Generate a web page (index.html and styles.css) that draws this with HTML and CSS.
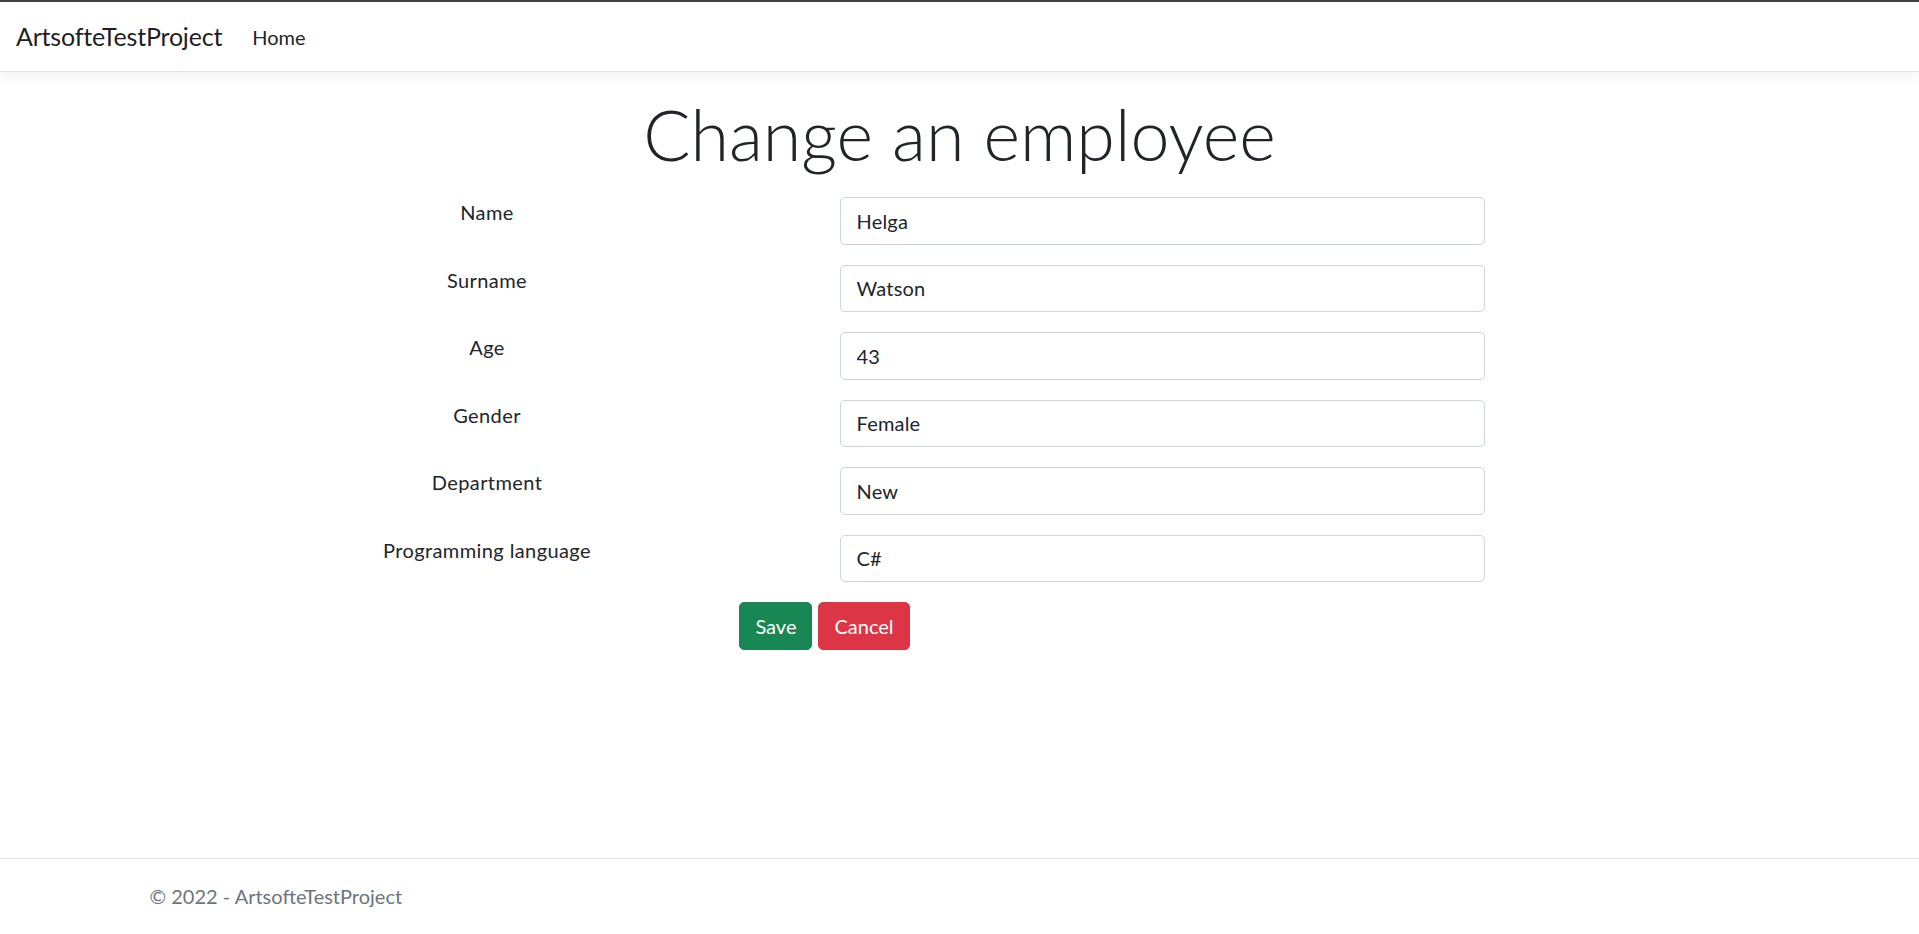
FILE: index.html
```html
<!DOCTYPE html>
<html lang="en">
<head>
<meta charset="utf-8">
<title>Change an employee - ArtsofteTestProject</title>
<link rel="stylesheet" href="styles.css">
</head>
<body>
<div class="page">
  <div class="topline"></div>
  <header class="navbar">
    <a class="brand" href="#">ArtsofteTestProject</a>
    <a class="nav-link" href="#">Home</a>
  </header>
  <main class="container main">
    <h1 class="title">Change an employee</h1>
    <form class="edit-form">
      <label class="field-label" for="name">Name</label>
      <div class="field"><input id="name" class="form-control" type="text" value="Helga"></div>
      <label class="field-label" for="surname">Surname</label>
      <div class="field"><input id="surname" class="form-control" type="text" value="Watson"></div>
      <label class="field-label" for="age">Age</label>
      <div class="field"><input id="age" class="form-control" type="text" value="43"></div>
      <label class="field-label" for="gender">Gender</label>
      <div class="field"><input id="gender" class="form-control" type="text" value="Female"></div>
      <label class="field-label" for="department">Department</label>
      <div class="field"><input id="department" class="form-control" type="text" value="New"></div>
      <label class="field-label" for="lang">Programming language</label>
      <div class="field"><input id="lang" class="form-control" type="text" value="C#"></div>
      <div class="actions">
        <button type="button" class="btn btn-success">Save</button>
        <button type="button" class="btn btn-danger">Cancel</button>
      </div>
    </form>
  </main>
  <footer class="footer">
    <div class="container">© 2022 - ArtsofteTestProject</div>
  </footer>
</div>
</body>
</html>
```

FILE: styles.css
```css
* { box-sizing: border-box; }
html, body { margin: 0; padding: 0; }
body {
  font-family: Lato, "Open Sans", sans-serif;
  font-size: 20px;
  line-height: 1.5;
  color: #212529;
  background: #fff;
}
.page {
  height: 100vh;
  display: flex;
  flex-direction: column;
  overflow: hidden;
}
.topline {
  height: 2px;
  background: #3f3f47;
  flex: none;
}
.navbar {
  flex: none;
  height: 70px;
  display: flex;
  align-items: center;
  padding: 0 15px;
  border-bottom: 1px solid #dee2e6;
  box-shadow: 0 5px 15px rgba(0,0,0,.05);
  position: relative;
  z-index: 1;
}
.brand {
  font-size: 25px;
  line-height: 37.5px;
  letter-spacing: -0.2px;
  color: rgba(0,0,0,.9);
  text-decoration: none;
  margin-right: 20px;
  padding-left: 1px;
}
.nav-link {
  font-size: 20px;
  line-height: 30px;
  color: #212529;
  text-decoration: none;
  padding: 0 10px;
}
.container {
  width: 100%;
  max-width: 1650px;
  margin: 0 auto;
  padding: 0 15px;
}
.main {
  flex: 1;
  padding-top: 20px;
}
.title {
  margin: 0 0 21px;
  font-size: 70px;
  font-weight: 300;
  line-height: 84px;
  text-align: center;
}
.edit-form {
  width: 1350px;
  display: grid;
  grid-template-columns: 675px 675px;
  row-gap: 20px;
}
.field-label {
  text-align: center;
  line-height: 30px;
  letter-spacing: 0.4px;
}
.field {
  padding: 0 15px;
}
.form-control {
  display: block;
  width: 100%;
  height: 47.5px;
  padding: 0 15px 0 16px;
  font: inherit;
  letter-spacing: 0.2px;
  color: #212529;
  background: #fff;
  border: 1px solid #ced4da;
  border-radius: 5px;
  outline: none;
}
.actions {
  grid-column: 1 / span 2;
  display: flex;
  justify-content: center;
  gap: 6px;
}
.btn {
  height: 47.5px;
  padding: 0 15px;
  font: inherit;
  color: #fff;
  border: 1px solid transparent;
  border-radius: 5px;
  cursor: pointer;
}
.btn-success { background: #198754; border-color: #198754; }
.btn-danger { background: #dc3545; border-color: #dc3545; }
.footer {
  flex: none;
  height: 76px;
  border-top: 1px solid #dee2e6;
  line-height: 75px;
  color: #6c757d;
  white-space: nowrap;
}
```
